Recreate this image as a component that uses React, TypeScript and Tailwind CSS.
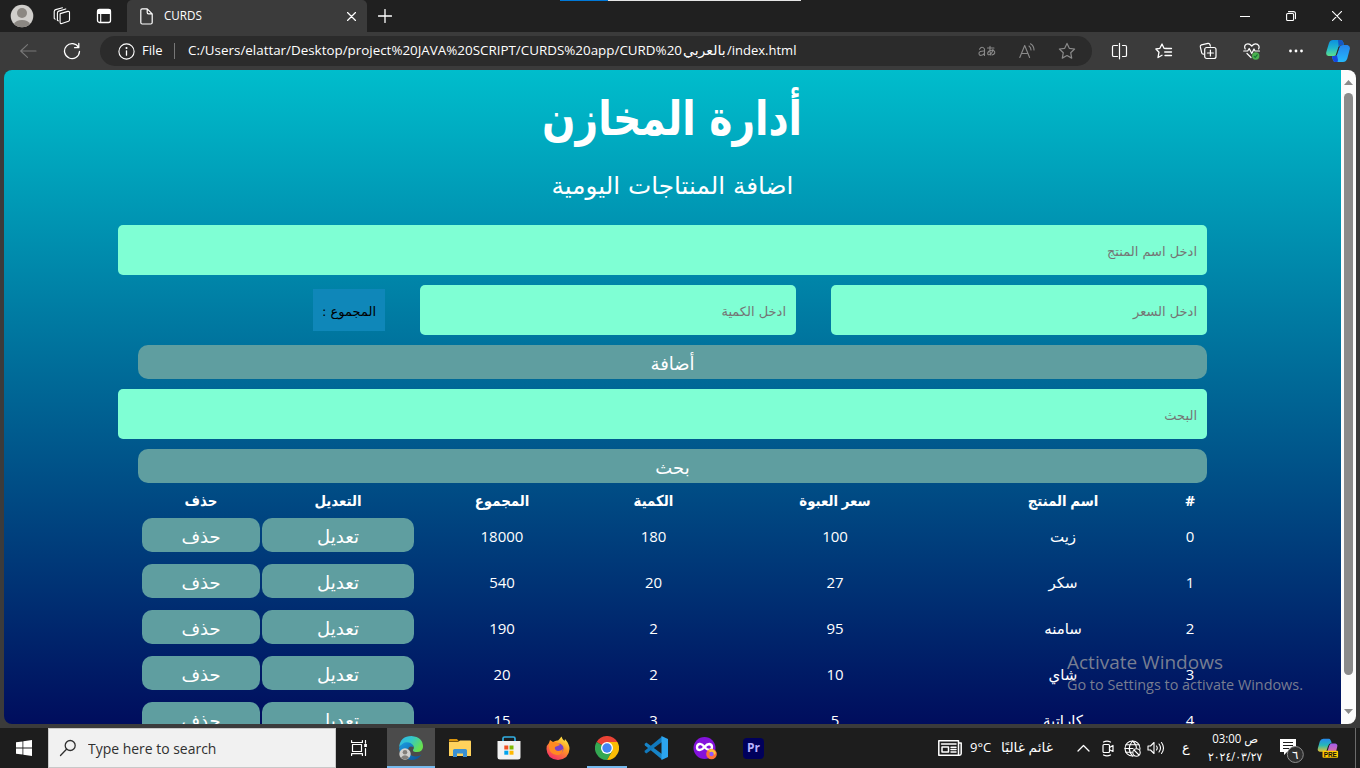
import React from "react";

type Product = { name: string; price: number; count: number; total: number };

const products: Product[] = [
  { name: "زيت", price: 100, count: 180, total: 18000 },
  { name: "سكر", price: 27, count: 20, total: 540 },
  { name: "سامنه", price: 95, count: 2, total: 190 },
  { name: "شاي", price: 10, count: 2, total: 20 },
  { name: "كاراتية", price: 5, count: 3, total: 15 },
];

const svgProps = {
  fill: "none",
  stroke: "currentColor",
  strokeWidth: 1.1,
  strokeLinecap: "round" as const,
  strokeLinejoin: "round" as const,
};

function Icon({ w, h, className = "", children }: { w: number; h: number; className?: string; children: React.ReactNode }) {
  return (
    <svg width={w} height={h} viewBox={`0 0 ${w} ${h}`} className={"shrink-0 " + className} {...svgProps}>
      {children}
    </svg>
  );
}

function TabBar() {
  return (
    <div className="flex h-8 bg-[#202020] text-white">
      <div className="flex w-[127px] items-center pl-[10px]">
        <Icon w={24} h={24}>
          <circle cx="12" cy="12" r="11.3" fill="#d0cecb" stroke="none" />
          <circle cx="12" cy="9" r="5" fill="#8b8782" stroke="none" />
          <path d="M4 20a8.5 6 0 0 1 16 0a11.3 11.3 0 0 1-16 0z" fill="#8b8782" stroke="none" />
        </Icon>
        <Icon w={18} h={18} className="ml-[19px]">
          <path d="M7.2 6.6l7.6-2.2q1.5-.3 1.7 1v7.4q0 1-1 1.400l-6.700 2.300q-1.500.4-1.700-1.100V8q0-1 .1-1.400z" />
          <path d="M4.400 13V6q.1-1.500 1.400-1.900l7-2.200" />
          <path d="M1.200 11V4.500q.2-1.500 1.500-1.900L9.500.8M4.400 13.200l.8.600M1.200 11.400l.9.700" />
        </Icon>
        <Icon w={16} h={16} className="ml-[25px]">
          <rect x="1.5" y="1.500" width="13" height="13" rx="2" strokeWidth="1.3" />
          <path d="M1 5V3q0-2 2-2h10q2 0 2 2v3H1z" fill="currentColor" stroke="none" />
          <path d="M4.700 5.500v9" />
        </Icon>
      </div>
      <div className="flex w-[240px] items-center rounded-t-[5px] bg-[#3b3b3b] pl-[13px]">
        <Icon w={13} h={17}>
          <path d="M2.200.8h5l5 5v8.700q0 1.500-1.500 1.500H2.200Q.8 16 .8 14.500V2.200Q.8.8 2.200.8zM7.200.8v3.700q0 1.300 1.300 1.300h3.700" strokeWidth="1.200" />
        </Icon>
        <span className="ml-[11px] inline-block w-[190px] origin-left scale-x-[.97] text-[12px] leading-8">CURDS</span>
        <Icon w={9} h={9} className="-ml-[7px]">
          <path d="M.5.5l8 8M8.500.5l-8 8" strokeWidth="1.200" />
        </Icon>
      </div>
      <Icon w={14} h={14} className="ml-[11px] mt-[9px]">
        <path d="M7 .5v13M.5 7h13" strokeWidth="1.300" />
      </Icon>
      <div className="ml-auto flex items-center">
        <Icon w={10} h={10} className="mr-[36px]">
          <path d="M0 5.500h10" />
        </Icon>
        <Icon w={10} h={10} className="mr-[36px]">
          <rect x=".6" y="2.500" width="7" height="7" rx="1" />
          <path d="M2.500.6h5Q9.500.6 9.500 2.600v5" />
        </Icon>
        <Icon w={10} h={10} className="mr-[18px]">
          <path d="M.3.3l9.400 9.400M9.700.3L.3 9.700" />
        </Icon>
      </div>
    </div>
  );
}

function Toolbar() {
  return (
    <div className="flex h-[38px] items-center text-white">
      <Icon w={17} h={14} className="ml-5 text-[#797979]">
        <path d="M7.500.7L.7 7l6.800 6.300M.7 7h15.300" />
      </Icon>
      <Icon w={18} h={18} className="ml-[26px]">
        <path d="M15.600 5.500A7.500 7.500 0 1 0 16.500 9.500M15.800 1.500v4.200h-4.200" strokeWidth="1.300" />
      </Icon>
      <div className="ml-[19px] flex h-[30px] w-[992px] items-center rounded-full bg-[#2b2b2b]">
        <Icon w={17} h={17} className="ml-[18px]">
          <circle cx="8.500" cy="8.500" r="7.600" />
          <path d="M8.500 7.800v4.400" strokeWidth="1.300" />
          <circle cx="8.500" cy="5" r=".5" fill="currentColor" />
        </Icon>
        <span className="ml-[7px] w-[32px] text-[13px]">File</span>
        <span className="h-4 w-px bg-[#777]" />
        <div className="ml-[13px] flex w-[790px] items-center whitespace-nowrap text-[13px]" dir="ltr">
          <span className="inline-block w-[495px] origin-left scale-x-[1.03]">C:/Users/elattar/Desktop/project%20JAVA%20SCRIPT/CURDS%20app/CURD%20</span>
          <span className="inline-block w-[44px] origin-left scale-x-[1.08]">بالعربي</span>
          <span className="inline-block">/index.html</span>
        </div>
        <div className="flex items-center text-[#8a8a8a]">
          <Icon w={18} h={14}>
            <path d="M1.500 5.200Q4 1.500 6.500 5v6.500M6.500 7Q1 6.700 1 9.300t2.500 2Q6 11 6.500 9" />
            <path d="M9.500 4h6.500M12 2.300q-.5 5 .7 8.700M15 5.500q-1 4.500-3.700 5.300-2 0-1.500-2 1-2.600 4.400-2.500 2.800.3 2.500 2.700-.5 1.600-2.700 2" />
          </Icon>
          <Icon w={16} h={16} className="ml-[23px]">
            <path d="M.8 14.500L5.700 2.500l4.900 12M2.300 10.500h6.800M10 3q2 1.500 2 4M11.500.8Q15 3 15 7" />
          </Icon>
          <Icon w={18} h={18} className="ml-[23px]">
            <path d="M9 1.400l2.300 4.900 5.300.7-3.900 3.700 1 5.400L9 13.500l-4.700 2.600 1-5.400L1.400 7l5.300-.7z" strokeWidth="1.200" />
          </Icon>
        </div>
      </div>
      <Icon w={18} h={18} className="ml-[19px]">
        <path d="M6.500 3.500H2.800Q1.500 3.500 1.500 4.800v8.400q0 1.300 1.300 1.300h3.700M11.500 3.500h2.700q1.300 0 1.300 1.300v8.400q0 1.300-1.300 1.300h-2.700M8.500 1.300v15.500" strokeWidth="1.200" />
      </Icon>
      <Icon w={18} h={18} className="ml-[26px]">
        <path d="M11 6.500L9 6.300 7 2 4.900 6.300.9 7l3.100 3.200-1 5.300L7 13.300M11.200 6.500h5.300M9.700 10h6.800M10 13.500h6.500" strokeWidth="1.300" />
      </Icon>
      <Icon w={18} h={18} className="ml-[26px]">
        <path d="M4.500 12.200Q3 12 2.700 10.800L1.300 4.700Q1.100 3.300 2.400 2.900L9 1.400q1.500-.2 1.900 1.100l.5 1.600" strokeWidth="1.200" />
        <rect x="5.700" y="5.500" width="11.300" height="11" rx="2" strokeWidth="1.200" />
        <path d="M11.400 8v6M8.400 11h6" strokeWidth="1.200" />
      </Icon>
      <Icon w={18} h={18} className="ml-[26px]">
        <path d="M2.200 7Q.7 3.800 3.200 2.200 6 .8 8.800 4q2.800-3.200 5.800-1.600Q17 4 15.600 7M.7 9h4l1.500-2.500 2.600 5L11 7l1 2h4.500M4 11.500L8 15.500" strokeWidth="1.200" />
        <circle cx="12.700" cy="14" r="3.700" fill="#4caf50" stroke="none" />
        <path d="M11.200 14.300l1 1 2-2.500" stroke="#173" />
      </Icon>
      <Icon w={16} h={4} className="ml-[27px]">
        <g fill="currentColor" stroke="none">
          <circle cx="2.500" cy="2" r="1.400" />
          <circle cx="8" cy="2" r="1.400" />
          <circle cx="13.500" cy="2" r="1.400" />
        </g>
      </Icon>
      <svg width="24" height="24" viewBox="0 0 24 24" className="ml-[22px] shrink-0">
        <defs>
          <linearGradient id="cpA" x1="0" y1="0" x2="0" y2="1">
            <stop offset="0" stopColor="#0c8fe0" />
            <stop offset=".5" stopColor="#1fb5cf" />
            <stop offset="1" stopColor="#5ce08c" />
          </linearGradient>
          <linearGradient id="cpB" x1="0" y1="0" x2="0" y2="1">
            <stop offset="0" stopColor="#2584ec" />
            <stop offset="1" stopColor="#25b9fb" />
          </linearGradient>
        </defs>
        <path d="M7 1h8q2 0 3 5h-3q-2 0-2.700 3l-1.500 6q-.8 2-3 2H2.500Q-.5 17 .3 13L3 4Q4 1 7 1z" fill="url(#cpA)" />
        <path d="M12 1h3q2 0 3 5h-3q-1.600 0-2.300 2z" fill="#1557c4" />
        <path d="M17 6h4.500q3 1 2.300 4l-2.500 9.500Q20 23 17 23H9q-2 0-3-6h3q1.500 0 2-2l2.500-7Q14.500 6 17 6z" fill="url(#cpB)" />
        <path d="M6 17h3q1 0 1.800-1.500L12 21l-.5 2H9q-2 0-3-6z" fill="#1746dd" />
        <path d="M13.500 8L11 15.500l-1.500 1.300 3-9z" fill="#2b2b2b" />
      </svg>
    </div>
  );
}

function Field({ label, wide }: { label: string; wide?: boolean }) {
  return (
    <div className={(wide ? "w-[1089px]" : "w-[376px]") + " flex h-[50px] shrink-0 items-center rounded-[5px] bg-[#7fffd4] px-[10px] pt-[3px] font-['DejaVu_Sans'] text-[13px] text-[#757575]"}>
      <span>{label}</span>
    </div>
  );
}

function WideButton({ children }: { children: string }) {
  return (
    <button className="flex h-[34px] w-[1069px] shrink-0 items-center justify-center rounded-[10px] bg-[#5f9ea0] pt-[3px] font-['DejaVu_Sans'] text-[18px] text-white">
      {children}
    </button>
  );
}

const rowGrid = "grid grid-cols-[30px_220px_232px_127px_172px_152px_118px] gap-x-[2px] w-[1063px] mr-[2px] items-center text-center";
const rowButton = "flex h-[34px] items-center justify-center rounded-[10px] bg-[#5f9ea0] pt-[3px] text-[18px]";

function Page() {
  return (
    <div className="mx-1 flex h-[654px] overflow-hidden rounded-[8px]">
      <main dir="rtl" className="flex w-[1337px] flex-col overflow-hidden bg-linear-to-b/srgb from-[#00bdcc] to-[#000d5d] pr-[134px] text-white">
        <h1 className="-mr-[134px] flex h-[96px] shrink-0 items-center justify-center font-['DejaVu_Sans'] text-[48px] font-bold">
          <span className="inline-block scale-x-[.817]">أدارة المخازن</span>
        </h1>
        <h2 className="-mr-[134px] flex h-[40px] shrink-0 items-center justify-center font-['DejaVu_Sans'] text-[24px]">
          <span className="inline-block scale-x-[1.03]">اضافة المنتاجات اليومية</span>
        </h2>
        <div className="mt-[19px] flex shrink-0 flex-col gap-[10px]">
          <Field label="ادخل اسم المنتج" wide />
          <div className="flex items-center gap-[35px]">
            <Field label="ادخل السعر" />
            <Field label="ادخل الكمية" />
            <div className="flex h-[42px] w-[72px] items-center justify-center bg-[#0f87b9] pt-[3px] font-['DejaVu_Sans'] text-[13px] whitespace-nowrap text-black">
              <span>المجموع :</span>
            </div>
          </div>
          <WideButton>أضافة</WideButton>
          <Field label="البحث" wide />
          <WideButton>بحث</WideButton>
        </div>
        <div className={rowGrid + " h-[35px] shrink-0 font-['Open_Sans','DejaVu_Sans'] text-[15px] font-bold"}>
          <span>#</span>
          {["اسم المنتج", "سعر العبوة", "الكمية", "المجموع", "التعديل", "حذف"].map((t) => (
            <span key={t} className="scale-x-[.89] text-[15px]">{t}</span>
          ))}
        </div>
        {products.map((p, i) => (
          <div key={p.name} className={rowGrid + " mb-3 h-[34px] shrink-0 text-[15px]"}>
            <span className="pt-[3px]">{i}</span>
            <span className="pt-[3px]">{p.name}</span>
            <span className="pt-[3px]">{p.price}</span>
            <span className="pt-[3px]">{p.count}</span>
            <span className="pt-[3px]">{p.total}</span>
            <button className={rowButton}>تعديل</button>
            <button className={rowButton}>حذف</button>
          </div>
        ))}
      </main>
      <div className="flex w-[15px] flex-col items-center bg-[#fcfcfc]">
        <svg width="9" height="5" viewBox="0 0 9 5" className="mt-[10px]" fill="#8b8b8b">
          <path d="M4.500 0L9 5H0z" />
        </svg>
        <div className="mt-2 h-[582px] w-[9px] rounded-full bg-[#8b8b8b]" />
        <svg width="9" height="5" viewBox="0 0 9 5" className="mt-[34px]" fill="#8b8b8b">
          <path d="M0 0h9L4.500 5z" />
        </svg>
      </div>
    </div>
  );
}

function AppButton({ children, state = "" }: { children: React.ReactNode; state?: string }) {
  return (
    <div className={"flex h-10 shrink-0 flex-col items-center justify-center " + (state === "active" ? "ml-px w-12 bg-[#4b4b4b] shadow-[inset_0_-2px_#76b9ed]" : "w-[49px]")}>
      {children}
    </div>
  );
}

function TaskApps() {
  return (
    <div className="flex">
      <AppButton state="active">
        <svg width="26" height="26" viewBox="0 0 26 26">
          <defs>
            <linearGradient id="edA" x1="0" y1="0" x2="1" y2=".5">
              <stop offset="0" stopColor="#2fb6ec" />
              <stop offset=".5" stopColor="#34c7c9" />
              <stop offset="1" stopColor="#67e04f" />
            </linearGradient>
            <linearGradient id="edB" x1="0" y1="0" x2="1" y2="1">
              <stop offset="0" stopColor="#1b9de2" />
              <stop offset="1" stopColor="#0b4f96" />
            </linearGradient>
          </defs>
          <path d="M1 12Q2.500 1 13.500 1 25 2 25 12q-.5 5-6 5-4.500 0-4-2 1.800-2 .2-4.500Q9 5 1 12z" fill="url(#edA)" />
          <path d="M1 13Q5 6 11 7.500q4 1 4.500 4.500Q11 10 10 14.500q0 6 7 7 4 .3 6.500-2Q20 25 13.500 25 2 24 1 13z" fill="url(#edB)" />
          <circle cx="7" cy="19" r="5.700" fill="#d2d0ce" />
          <circle cx="7" cy="17.300" r="2.300" fill="#837f7b" />
          <path d="M3 22.500q4-4.500 8 0-4 4-8 0z" fill="#837f7b" />
        </svg>
      </AppButton>
      <AppButton>
        <svg width="22" height="18" viewBox="0 0 22 18">
          <path d="M0 1q0-1 1-1h7l2 2.500H0z" fill="#d9940c" />
          <path d="M0 3h9l2-1.500h10q1 0 1 1V17H0z" fill="#ffd25c" />
          <path d="M4 11.500Q4 10 5.500 10h11q1.500 0 1.500 1.500V18h-4v-3.500H8V18H4z" fill="#3b91d3" />
        </svg>
      </AppButton>
      <AppButton>
        <svg width="24" height="24" viewBox="0 0 24 24">
          <path d="M6 6V2.500Q6 1 7.500 1h9Q18 1 18 2.500V6" fill="none" stroke="#32aee2" strokeWidth="1.700" />
          <path d="M.5 5h23v16q0 2.500-2.500 2.500H3Q.5 23.500.5 21z" fill="#f2f2f2" />
          <path d="M7.300 9.500h4v4h-4z" fill="#f25022" />
          <path d="M12.500 9.500h4v4h-4z" fill="#7fba00" />
          <path d="M7.300 14.700h4v4h-4z" fill="#00a4ef" />
          <path d="M12.500 14.700h4v4h-4z" fill="#ffb900" />
        </svg>
      </AppButton>
      <AppButton>
        <svg width="24" height="24" viewBox="0 0 24 24">
          <defs>
            <linearGradient id="ff" x1=".8" y1="0" x2=".2" y2="1">
              <stop offset="0" stopColor="#fff04a" />
              <stop offset=".4" stopColor="#ff9a24" />
              <stop offset="1" stopColor="#f4266c" />
            </linearGradient>
          </defs>
          <path d="M3 7l1-3 3 2q3-2 5-1.500Q14 2.500 15.500.5q.5 2.500 3 4.500L19 3q4.500 5 4.500 10-.5 10-11.500 11Q1 23 .5 13 .5 9 3 7z" fill="url(#ff)" />
          <circle cx="12.500" cy="12.500" r="5" fill="#7a42c9" />
          <path d="M3 7q5-2 9 0l2 2-5 2q-1 3 3 4 3 0 5-2-1 6-6 6-7-1-8-7z" fill="#ff8a22" />
        </svg>
      </AppButton>
      <div className="flex h-10 w-[49px] shrink-0 flex-col items-center justify-between pt-2">
        <svg width="24" height="24" viewBox="0 0 24 24">
          <path d="M12 12L1.600 6A12 12 0 0 1 22.400 6z" fill="#ea4335" />
          <path d="M12 12L1.600 6A12 12 0 0 0 12 24l5.200-9z" fill="#34a853" />
          <path d="M17.200 15L12 24A12 12 0 0 0 22.400 6H12z" fill="#fbbc05" />
          <circle cx="12" cy="12" r="6" fill="#fff" />
          <circle cx="12" cy="12" r="4.700" fill="#4285f4" />
        </svg>
        <span className="h-[2px] w-10 bg-[#76b9ed]" />
      </div>
      <AppButton>
        <svg width="24" height="24" viewBox="0 0 24 24">
          <path d="M.5 8l1.800-1.500L18 18v5.500L1 9.500z" fill="#1784c7" />
          <path d="M.5 16l1.800 1.500L18 6V.5L1 14.500z" fill="#1179bd" />
          <path d="M17.500 0L24 3v18l-6.500 3z" fill="#2ca5ef" />
        </svg>
      </AppButton>
      <AppButton>
        <svg width="24" height="24" viewBox="0 0 24 24">
          <circle cx="11.500" cy="12" r="11" fill="#8412dc" />
          <path d="M11.500 11Q9 7.500 6.500 8 4 8.500 4 11.200T6.800 14q2.200 0 4.700-3 2.500-3 4.700-3 2.800.5 2.800 3T16.300 14q-2.300 0-4.800-3z" fill="none" stroke="#fff" strokeWidth="2.300" />
          <circle cx="18.500" cy="18" r="5.300" fill="#ff7139" />
          <path d="M14 14q2 1 4-1 3 0 5 4l-2 2q-1-3-4-3z" fill="#ffc13a" />
          <circle cx="18.500" cy="18" r="2.200" fill="#9059ff" />
        </svg>
      </AppButton>
      <AppButton>
        <span className="flex h-[21px] w-[21px] items-center justify-center rounded-[4px] bg-[#00005b] text-[12px] font-bold text-[#b9b3ff]">Pr</span>
      </AppButton>
    </div>
  );
}

function Taskbar() {
  return (
    <div className="mt-1 flex h-10 items-center bg-[#1d1d1d] text-white">
      <div className="flex w-12 justify-center">
        <svg width="16" height="16" viewBox="0 0 16 16" fill="#fff">
          <path d="M0 2.300L6.500 1.400v6.200H0zM7.300 1.300L16 0v7.600H7.300zM0 8.400h6.500v6.200L0 13.700zM7.300 8.400H16V16l-8.700-1.300z" />
        </svg>
      </div>
      <div className="flex h-10 w-72 items-center border border-[#c8c8c8] bg-[#f1f1f1] text-[#303030]">
        <Icon w={18} h={18} className="ml-[10px]">
          <circle cx="11.200" cy="6.500" r="5" strokeWidth="1.300" />
          <path d="M7.500 10.200L1.500 16.500" strokeWidth="1.300" />
        </Icon>
        <span className="ml-[11px] inline-block origin-left scale-x-[.93] text-[15px] whitespace-nowrap">Type here to search</span>
      </div>
      <div className="flex w-[50px] justify-center pr-[3px]">
        <Icon w={17} h={16}>
          <rect x="1.500" y="4.500" width="9" height="7" strokeWidth="1.200" />
          <path d="M.6.600v1.900h10.800V.6M.6 15.500v-1.900h10.800v1.900M14.500.5v2.700M14.500 8.500v7" strokeWidth="1.200" />
          <path d="M13.200 4h2.700v3h-2.700z" fill="currentColor" stroke="none" />
        </Icon>
      </div>
      <TaskApps />
      <div className="ml-[160px] flex items-center">
        <Icon w={24} h={16}>
          <path d="M.8.8h19.700v14.400H.8zM20.500 3h2.700v10.500q0 1.700-1.700 1.700H19" strokeWidth="1.500" />
          <path d="M3.500 4h14.500M13 7.300h5M13 9.500h5M13 12h5" strokeWidth="1.500" />
          <rect x="4" y="7" width="6.500" height="5" strokeWidth="1.500" />
        </Icon>
        <span className="ml-2 w-[30px] origin-left text-[13px] whitespace-nowrap">9°C</span>
        <span className="inline-block w-[53px] origin-right scale-x-[1.06] text-[13px] whitespace-nowrap" dir="rtl">غائم غالبًا</span>
      </div>
      <Icon w={13} h={8} className="ml-[24px]">
        <path d="M1 7l5.500-5.500L12 7" strokeWidth="1.300" />
      </Icon>
      <Icon w={12} h={17} className="ml-[12px]">
        <rect x="1" y="4.500" width="6.500" height="8" rx="1" strokeWidth="1.200" />
        <path d="M7.500 7.500L11 5.500v6L7.500 9.800M1.500 2q3.500-1.700 7 0M1.500 15q3.500 1.700 7 0" strokeWidth="1.200" />
      </Icon>
      <Icon w={17} h={17} className="ml-[10px]">
        <circle cx="8.500" cy="8.500" r="7.500" />
        <path d="M8.500 1Q2 8.500 8.500 16M8.500 1Q12.500 4.500 12.400 8M1 8.500h8M2 4.800h13M2 12.200h6" />
        <circle cx="12.500" cy="12.500" r="3.700" fill="#1d1d1d" />
        <path d="M10 10l5 5" />
      </Icon>
      <Icon w={18} h={14} className="ml-[6px]">
        <path d="M1 5h2.500L7 1.500v11L3.500 9H1zM9.500 5q1.500 2 0 4M12 3q3 4 0 8M14.500 1.500q4 5.500 0 11" />
      </Icon>
      <span className="ml-[14px] w-[14px] text-center text-[13px]">ع</span>
      <div className="ml-[7px] flex w-[70px] flex-col items-center text-[12px] leading-[18px] whitespace-nowrap">
        <span className="inline-block scale-x-[.95]"><bdo dir="ltr">03:00 ص</bdo></span>
        <span className="inline-block scale-x-[.9]"><bdo dir="ltr">٢٠٢٤/٠٣/٢٧</bdo></span>
      </div>
      <svg width="26" height="26" viewBox="0 0 26 26" className="ml-[9px] mt-[6px] shrink-0">
        <path d="M1 1h16v13H8l-3 3v-3H1z" fill="#fff" />
        <path d="M4 4.500h10M4 7.500h10M4 10.500h6" stroke="#1d1d1d" strokeWidth="1.200" />
        <circle cx="16.300" cy="16.500" r="8" fill="#303030" stroke="#8d8d8d" />
        <text x="16.300" y="21" textAnchor="middle" fontSize="12" fill="#fff" fontFamily="DejaVu Sans">٦</text>
      </svg>
      <svg width="22" height="22" viewBox="0 0 24 22" className="ml-[12px] shrink-0">
        <defs>
          <linearGradient id="pcA" x1="0" y1="0" x2="0" y2="1">
            <stop offset="0" stopColor="#2589ee" />
            <stop offset=".5" stopColor="#27b8b7" />
            <stop offset="1" stopColor="#e5c32f" />
          </linearGradient>
          <linearGradient id="pcB" x1="0" y1="0" x2="0" y2="1">
            <stop offset="0" stopColor="#a05cf0" />
            <stop offset="1" stopColor="#f07588" />
          </linearGradient>
        </defs>
        <path d="M7 1h6q2 0 3 5-3-.5-4 3l-2 6H3q-3-.5-2-4L3 4Q4 1 7 1z" fill="url(#pcA)" />
        <path d="M16 6h4q3 .5 2 4l-2 8H9q2-1 3-5l1.500-5Q14.500 6 16 6z" fill="url(#pcB)" />
        <rect x="6" y="14" width="17" height="7.500" rx="1" fill="#ffc900" />
        <text x="14.500" y="20.300" textAnchor="middle" fontSize="7" fontWeight="bold" fill="#111" fontFamily="Liberation Sans">PRE</text>
      </svg>
      <span className="ml-auto mr-1 h-10 w-px bg-[#6b6b6b]" />
    </div>
  );
}

export default function App() {
  return (
    <div className="relative h-[768px] w-[1360px] overflow-hidden bg-[#3b3b3b] font-['Open_Sans','DejaVu_Sans',sans-serif]">
      <TabBar />
      <Toolbar />
      <Page />
      <Taskbar />
      <div className="absolute top-0 left-[560px] flex h-px w-[241px] bg-[#e5e5e5]">
        <span className="w-12 bg-[#0078d7]" />
      </div>
      <div className="absolute top-[649px] left-[1067px] whitespace-nowrap text-[#a0a0a0]/75">
        <div className="origin-left text-[19px] leading-[26px]">Activate Windows</div>
        <div className="origin-left scale-x-[.993] text-[14.500px] leading-[20px]">Go to Settings to activate Windows.</div>
      </div>
    </div>
  );
}
